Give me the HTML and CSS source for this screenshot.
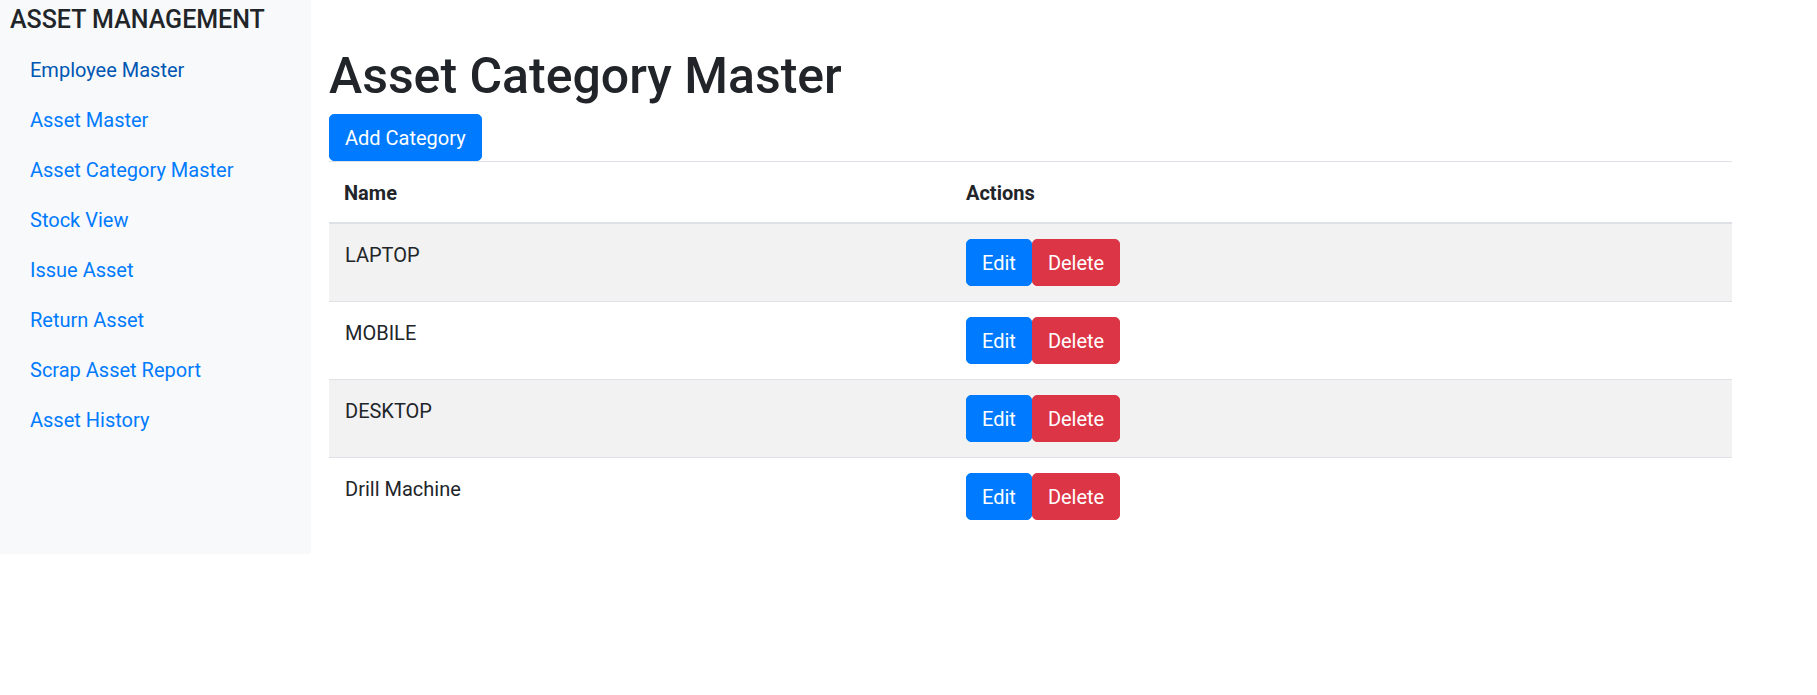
FILE: index.html
```html
<!DOCTYPE html>
<html lang="en">
<head>
<meta charset="utf-8">
<title>Asset Category Master</title>
<link rel="stylesheet" href="styles.css">
</head>
<body>
<div class="layout">
  <aside class="sidebar">
    <h5 class="brand">ASSET MANAGEMENT</h5>
    <nav class="nav">
      <a class="nav-link visited" href="#">Employee Master</a>
      <a class="nav-link" href="#">Asset Master</a>
      <a class="nav-link" href="#">Asset Category Master</a>
      <a class="nav-link" href="#">Stock View</a>
      <a class="nav-link" href="#">Issue Asset</a>
      <a class="nav-link" href="#">Return Asset</a>
      <a class="nav-link" href="#">Scrap Asset Report</a>
      <a class="nav-link" href="#">Asset History</a>
    </nav>
  </aside>
  <main class="main">
    <h1 class="page-title">Asset Category Master</h1>
    <button class="btn btn-primary">Add Category</button>
    <table class="table">
      <thead>
        <tr><th class="col-name">Name</th><th>Actions</th></tr>
      </thead>
      <tbody>
        <tr class="odd"><td class="cell-text">LAPTOP</td><td><div class="actions"><button class="btn btn-primary">Edit</button><button class="btn btn-danger">Delete</button></div></td></tr>
        <tr><td class="cell-text">MOBILE</td><td><div class="actions"><button class="btn btn-primary">Edit</button><button class="btn btn-danger">Delete</button></div></td></tr>
        <tr class="odd"><td class="cell-text">DESKTOP</td><td><div class="actions"><button class="btn btn-primary">Edit</button><button class="btn btn-danger">Delete</button></div></td></tr>
        <tr><td class="cell-text">Drill Machine</td><td><div class="actions"><button class="btn btn-primary">Edit</button><button class="btn btn-danger">Delete</button></div></td></tr>
      </tbody>
    </table>
  </main>
</div>
</body>
</html>
```
FILE: styles.css
```css
* { box-sizing: border-box; }
html, body { margin: 0; padding: 0; background: #fff; }
body {
  font-family: Roboto, "Liberation Sans", sans-serif;
  font-size: 20px;
  line-height: 30px;
  color: #212529;
}
.layout { display: flex; align-items: flex-start; }
.sidebar {
  width: 311px;
  height: 554px;
  flex: none;
  background: #f8f9fa;
  padding: 5px 10px 0 10px;
}
.brand {
  margin: 0 0 10px 0;
  font-size: 25px;
  line-height: 30px;
  font-weight: 500;
  color: #212529;
}
.nav { display: flex; flex-direction: column; }
.nav-link {
  display: block;
  padding: 10px 20px;
  color: #007bff;
  text-decoration: none;
  line-height: 30px;
}
.nav-link.visited { color: #0056b3; }
.main {
  width: 1440px;
  flex: none;
  padding: 46px 18px 0 18px;
}
.page-title {
  margin: 0 0 8px 0;
  font-size: 50px;
  line-height: 60px;
  font-weight: 500;
  color: #212529;
}
.btn {
  display: inline-block;
  font-family: inherit;
  font-size: 20px;
  line-height: 30px;
  padding: 7.5px 15px;
  border: 1px solid transparent;
  border-radius: 5px;
  color: #fff;
  cursor: pointer;
  vertical-align: top;
}
.btn-primary { background: #007bff; border-color: #007bff; }
.btn-danger { background: #dc3545; border-color: #dc3545; }
.table {
  width: 1403px;
  border-collapse: collapse;
  border-top: 1px solid #dee2e6;
}
.table th, .table td {
  padding: 15px;
  text-align: left;
  vertical-align: top;
  line-height: 30px;
}
.table th { font-weight: 700; border-bottom: 2px solid #dee2e6; padding: 16px 15px 14px 15px; }
.table td.cell-text { padding: 16px 15px 14px 16px; }
.table tbody tr + tr td { border-top: 1px solid #dee2e6; }
.col-name { width: 622px; }
.table tr.odd { background: #f2f2f2; }
.actions { display: flex; }
```
